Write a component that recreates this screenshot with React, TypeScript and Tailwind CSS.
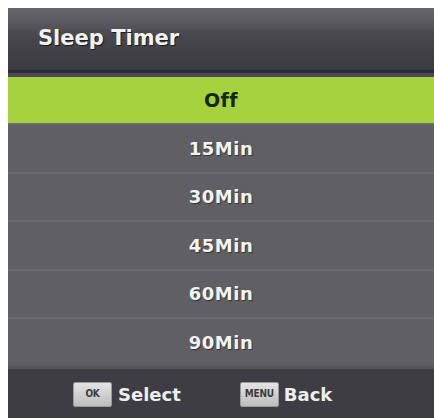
const OPTIONS = ['Off', '15Min', '30Min', '45Min', '60Min', '90Min'];

function KeyCap({ label }: { label: string }) {
  return (
    <div className="flex h-[25px] w-[39px] items-center justify-center rounded-[2px] border border-[#9a9a9a] bg-gradient-to-b from-[#e4e4e4] to-[#bdbdbd] text-[10px] font-bold leading-none tracking-tight text-[#3a3a3a] [font-family:'DejaVu_Sans_Condensed','DejaVu_Sans',sans-serif]">
      {label}
    </div>
  );
}

export default function App() {
  const selected = 0;

  return (
    <div className="h-[418px] w-[434px] overflow-hidden bg-white pl-[8px] pt-[8px] [font-family:'DejaVu_Sans',sans-serif]">
      <div className="flex h-[410px] w-[426px] flex-col">
        {/* Titre */}
        <div className="relative flex h-[62px] items-center bg-gradient-to-b from-[#626266] via-[#45454b] to-[#3a3a40] pl-[30px]">
          <div className="absolute inset-x-0 top-0 h-[22px] bg-gradient-to-b from-[#6a6a6e] to-[#505056] opacity-80" />
          <span className="relative text-[21px] font-bold text-[#f2f2f2] [text-shadow:1px_1px_1px_#1a1a1a]">
            Sleep Timer
          </span>
        </div>
        <div className="h-[3px] bg-[#2c2c3a]" />
        <div className="h-[4px] bg-[#4a4a50]" />

        {/* Liste */}
        <div className="flex flex-col">
          {OPTIONS.map((opt, i) =>
            i === selected ? (
              <div
                key={opt}
                className="flex h-[46px] items-center justify-center bg-[#a7d23f] text-[19px] font-bold tracking-[0.5px] text-[#142806]"
              >
                {opt}
              </div>
            ) : (
              <div
                key={opt}
                className="flex h-[48.5px] items-center justify-center border-t-2 border-[#6a6a6e] bg-[#606064] text-[18px] font-bold tracking-[0.5px] text-[#f4f4f4] [text-shadow:1px_1px_1px_#333]"
              >
                {opt}
              </div>
            )
          )}
        </div>

        {/* Aide */}
        <div className="h-[3px] bg-[#55555a]" />
        <div className="flex flex-1 items-center bg-[#3d3d43] pt-[2px]">
          <div className="ml-[65px] flex items-center gap-[6px]">
            <KeyCap label="OK" />
            <span className="text-[18px] font-bold text-[#eeeeee]">Select</span>
          </div>
          <div className="ml-[59px] flex items-center gap-[5px]">
            <KeyCap label="MENU" />
            <span className="text-[18px] font-bold text-[#eeeeee]">Back</span>
          </div>
        </div>
      </div>
    </div>
  );
}
